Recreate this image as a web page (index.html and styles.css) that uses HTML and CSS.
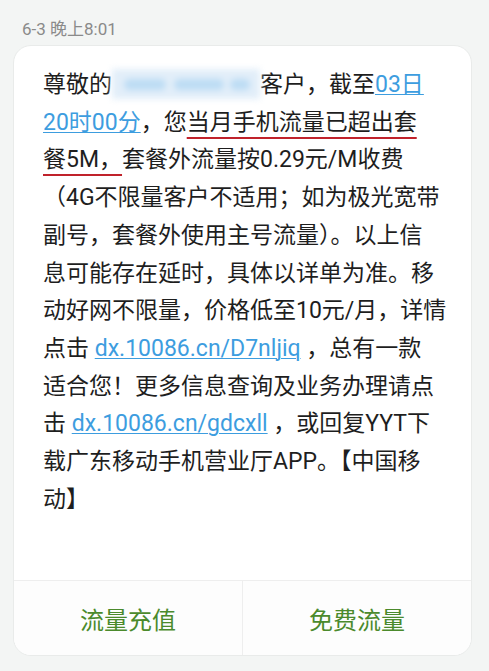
FILE: index.html
```html
<!DOCTYPE html>
<html lang="zh-CN">
<head>
<meta charset="utf-8">
<link rel="stylesheet" href="styles.css">
</head>
<body>
<div class="page">
  <div class="time">6-3 晚上8:01</div>
  <div class="card">
    <p class="msg">尊敬的<span class="blur"><span class="blob b1"></span><span class="blob b2"></span><span class="blob b3"></span></span>客户，截至<a class="link">03日</a><br><a class="link">20时00分</a>，您<span class="red">当月手机流量已超出套</span><br><span class="red">餐5M，</span>套餐外流量按0.29元/M收费<br>（4G不限量客户不适用；如为极光宽带<br>副号，套餐外使用主号流量）。以上信<br>息可能存在延时，具体以详单为准。移<br>动好网不限量，价格低至10元/月，详情<br>点击 <a class="link url">dx.10086.cn/D7nljiq</a> ，总有一款<br>适合您！更多信息查询及业务办理请点<br>击 <a class="link url">dx.10086.cn/gdcxll</a> ，或回复YYT下<br>载广东移动手机营业厅APP。【中国移<br>动】</p>
    <div class="actions">
      <div class="btn">流量充值</div>
      <div class="btn">免费流量</div>
    </div>
  </div>
</div>
</body>
</html>
```
FILE: styles.css
```css
html, body {
  margin: 0;
  padding: 0;
  background: #f3f5f4;
}
body {
  width: 489px;
  height: 671px;
  overflow: hidden;
  font-family: Roboto, "Noto Sans CJK SC", sans-serif;
}
.page {
  padding: 0 17px 0 13px;
}
.time {
  padding: 17px 0 0 9px;
  height: 28px;
  font-size: 17px;
  line-height: 24px;
  color: #8a8a8a;
}
.card {
  background: #fff;
  border: 1px solid #e9ebea;
  border-radius: 18px;
  overflow: hidden;
  display: flex;
  flex-direction: column;
}
.msg {
  margin: 0;
  padding: 20px 0 62px 29px;
  font-size: 23px;
  line-height: 37.7px;
  color: #1e1e1e;
  white-space: nowrap;
}
.link {
  color: #3d9ddf;
  text-decoration: underline;
  text-decoration-thickness: 1px;
  text-underline-offset: 2px;
}
.url {
  font-family: Roboto, sans-serif;
}
.red {
  text-decoration: underline;
  text-decoration-color: #c0222b;
  text-decoration-thickness: 2px;
  text-underline-offset: 7px;
}
.blur {
  display: inline-block;
  position: relative;
  width: 148px;
  height: 30px;
  vertical-align: -7px;
  background: #e2eef9;
  filter: blur(3px);
}
.blob {
  position: absolute;
  top: 10px;
  height: 11px;
  background: #bcdcf4;
  border-radius: 6px;
}
.b1 { left: 12px; width: 42px; }
.b2 { left: 62px; width: 50px; }
.b3 { left: 118px; width: 20px; }
.actions {
  display: flex;
  border-top: 1px solid #eeeeee;
  background: #fdfdfd;
  height: 74px;
}
.btn {
  flex: 1;
  display: flex;
  align-items: center;
  justify-content: center;
  font-family: "Noto Sans CJK SC", sans-serif;
  font-size: 24px;
  color: #4b8a2c;
}
.btn + .btn {
  border-left: 1px solid #eeeeee;
}
```
